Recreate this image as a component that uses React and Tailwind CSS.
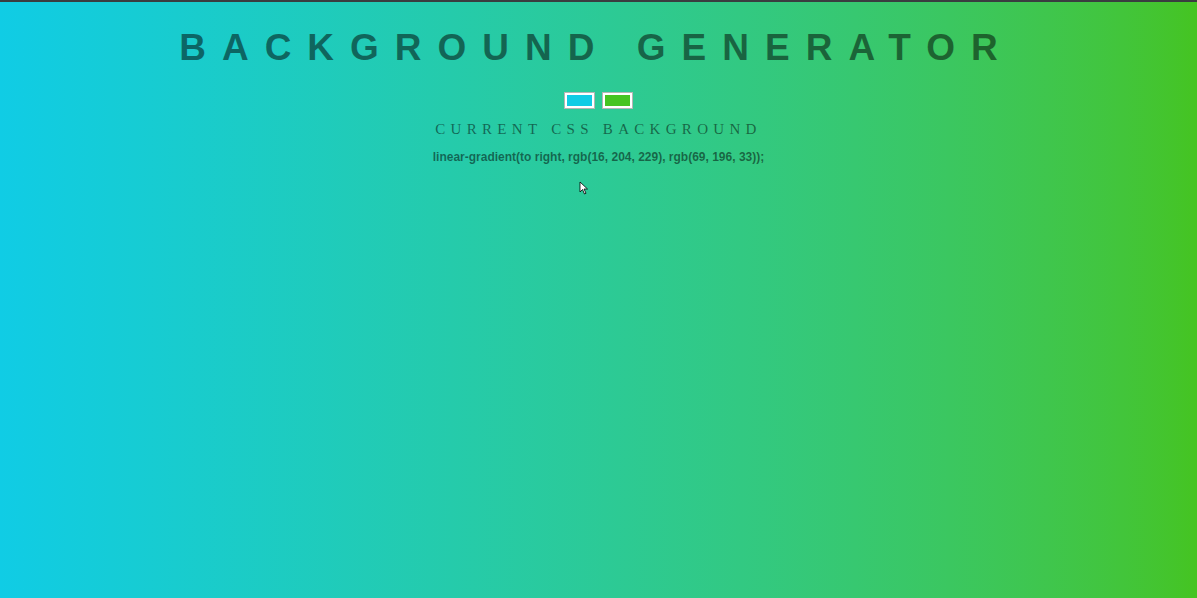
export default function App() {
  const left = "rgb(16, 204, 229)";
  const right = "rgb(69, 196, 33)";

  return (
    <div className="relative min-h-[598px] w-full border-t-2 border-[#3a3d40] bg-gradient-to-r from-[#10cce5] to-[#45c421] text-center">
      <h1 className="pr-[4px] pt-[23px] font-['Liberation_Sans',Arial,sans-serif] text-[37px] font-bold uppercase leading-[46px] tracking-[16px] text-black/50">
        Background Generator
      </h1>
      <div className="mt-[22px] flex justify-center gap-[9px]">
        <div className="h-[15px] w-[29px] border-2 border-white bg-[#10cce5] outline outline-1 outline-[#b5b5b5]" />
        <div className="h-[15px] w-[29px] border-2 border-white bg-[#45c421] outline outline-1 outline-[#b5b5b5]" />
      </div>
      <h3 className="mt-[11px] font-['Liberation_Serif','Times_New_Roman',serif] text-[15px] uppercase leading-[20px] tracking-[5.3px] text-black/50">
        Current CSS Background
      </h3>
      <p className="mt-[11px] font-['Liberation_Sans',Arial,sans-serif] text-[12px] font-bold leading-[15px] text-black/50">
        linear-gradient(to right, {left}, {right});
      </p>
      <svg
        className="absolute left-[579px] top-[179px]"
        width="10"
        height="14"
        viewBox="0 0 10 14"
      >
        <path d="M1 1 L1 11 L3.5 8.5 L5.5 13 L7 12.3 L5 8 L8.5 8 Z" fill="white" stroke="black" strokeWidth="0.8" />
      </svg>
    </div>
  );
}
